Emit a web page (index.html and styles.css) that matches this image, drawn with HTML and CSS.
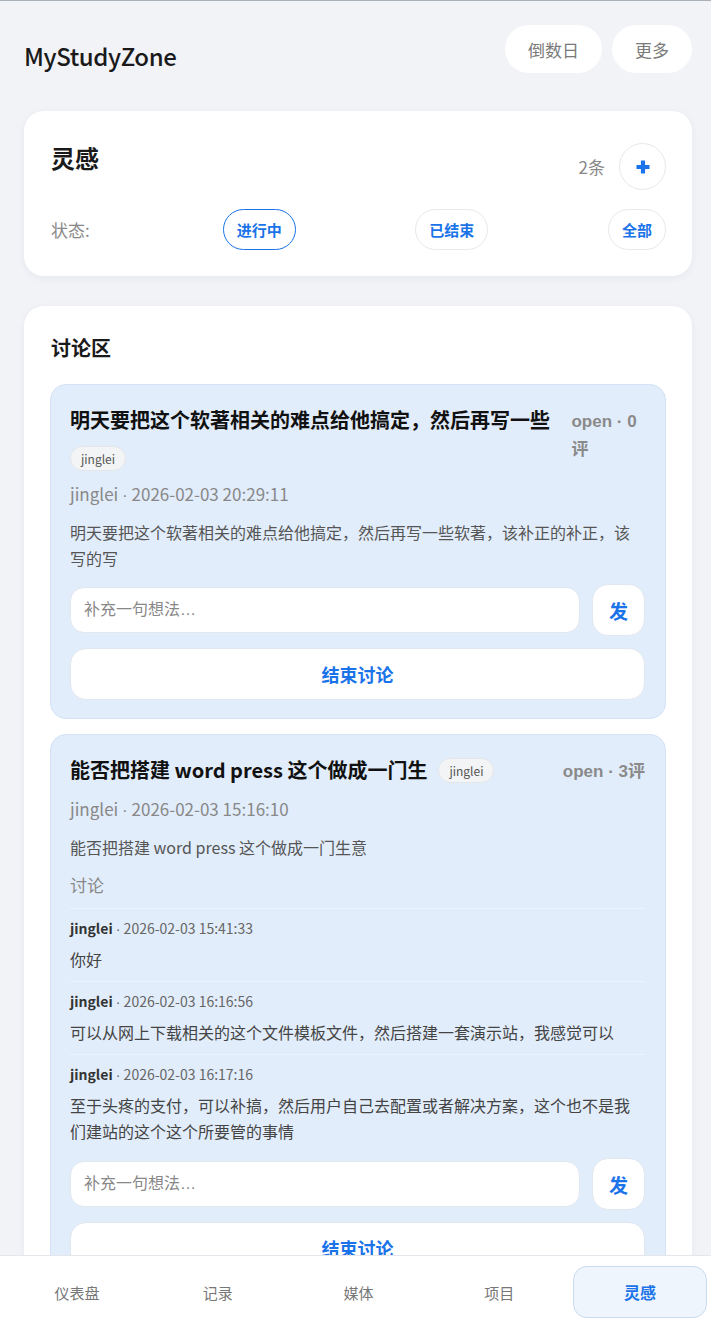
FILE: index.html
```html
<!DOCTYPE html>
<html lang="zh-CN">
<head>
<meta charset="utf-8">
<title>MyStudyZone</title>
<link rel="stylesheet" href="styles.css">
</head>
<body>
<div class="page">
  <header class="topbar">
    <h1 class="brand">MyStudyZone</h1>
    <div class="top-actions">
      <button class="pill-btn">倒数日</button>
      <button class="pill-btn">更多</button>
    </div>
  </header>

  <section class="card summary">
    <div class="summary-head">
      <h2 class="summary-title">灵感</h2>
      <div class="summary-right">
        <span class="count">2条</span>
        <button class="add-btn" aria-label="新增">
          <svg width="16" height="16" viewBox="0 0 16 16"><path d="M8 1.5v13M1.5 8h13" stroke="#1a73e8" stroke-width="4.2" stroke-linecap="butt" fill="none"/></svg>
        </button>
      </div>
    </div>
    <div class="filter-row">
      <span class="filter-label">状态:</span>
      <button class="filter active">进行中</button>
      <button class="filter">已结束</button>
      <button class="filter">全部</button>
    </div>
  </section>

  <section class="card board">
    <h2 class="board-title">讨论区</h2>

    <article class="topic">
      <div class="topic-head">
        <div class="topic-title-wrap">
          <h3 class="topic-title">明天要把这个软著相关的难点给他搞定，然后再写一些</h3>
          <span class="tag">jinglei</span>
        </div>
        <span class="topic-status">open · 0评</span>
      </div>
      <div class="topic-meta">jinglei <span class="dot">·</span> 2026-02-03 20:29:11</div>
      <p class="topic-body">明天要把这个软著相关的难点给他搞定，然后再写一些软著，该补正的补正，该写的写</p>
      <div class="reply-row">
        <input class="reply-input" type="text" placeholder="补充一句想法…">
        <button class="send-btn">发</button>
      </div>
      <button class="close-btn">结束讨论</button>
    </article>

    <article class="topic">
      <div class="topic-head">
        <div class="topic-title-wrap">
          <h3 class="topic-title">能否把搭建 word press 这个做成一门生</h3>
          <span class="tag">jinglei</span>
        </div>
        <span class="topic-status">open · 3评</span>
      </div>
      <div class="topic-meta">jinglei <span class="dot">·</span> 2026-02-03 15:16:10</div>
      <p class="topic-body">能否把搭建 word press 这个做成一门生意</p>
      <div class="comments-label">讨论</div>
      <ul class="comments">
        <li class="comment">
          <div class="comment-meta"><b>jinglei</b> <span class="dot">·</span> 2026-02-03 15:41:33</div>
          <p class="comment-text">你好</p>
        </li>
        <li class="comment">
          <div class="comment-meta"><b>jinglei</b> <span class="dot">·</span> 2026-02-03 16:16:56</div>
          <p class="comment-text">可以从网上下载相关的这个文件模板文件，然后搭建一套演示站，我感觉可以</p>
        </li>
        <li class="comment">
          <div class="comment-meta"><b>jinglei</b> <span class="dot">·</span> 2026-02-03 16:17:16</div>
          <p class="comment-text">至于头疼的支付，可以补搞，然后用户自己去配置或者解决方案，这个也不是我们建站的这个这个所要管的事情</p>
        </li>
      </ul>
      <div class="reply-row">
        <input class="reply-input" type="text" placeholder="补充一句想法…">
        <button class="send-btn">发</button>
      </div>
      <button class="close-btn">结束讨论</button>
    </article>
  </section>
</div>

<nav class="tabbar">
  <a class="tab">仪表盘</a>
  <a class="tab">记录</a>
  <a class="tab">媒体</a>
  <a class="tab">项目</a>
  <a class="tab active">灵感</a>
</nav>
</body>
</html>
```

FILE: styles.css
```css
* { box-sizing: border-box; }

html, body {
  margin: 0;
  padding: 0;
}

body {
  background: #f1f3f7;
  font-family: "Noto Sans CJK SC", "Noto Sans", sans-serif;
  color: #1a1a1a;
  border-top: 1px solid #a9b0b8;
}

button, input {
  font-family: inherit;
}

.dot {
  font-family: "Liberation Sans", sans-serif;
  line-height: 0;
}

.page {
  padding: 24px 19px 100px 24px;
}

/* header */
.topbar {
  display: flex;
  align-items: center;
  justify-content: space-between;
  height: 48px;
}

.brand {
  margin: 12px 0 0;
  font-size: 24px;
  font-weight: 500;
  letter-spacing: -0.4px;
  color: #1a1a1a;
}

.top-actions {
  display: flex;
  gap: 10px;
}

.pill-btn {
  height: 48px;
  border: none;
  background: #fff;
  border-radius: 24px;
  padding: 0 23px;
  font-size: 17px;
  color: #7a7a7a;
}

/* cards */
.card {
  background: #fff;
  border-radius: 20px;
  box-shadow: 0 2px 8px rgba(20, 40, 80, 0.05);
}

.summary {
  margin-top: 38px;
  padding: 28px 26px 26px 27px;
}

.summary-head {
  display: flex;
  justify-content: space-between;
  align-items: flex-start;
}

.summary-title {
  margin: 0;
  font-size: 24px;
  line-height: 38px;
  font-weight: 700;
}

.summary-right {
  display: flex;
  align-items: center;
  gap: 14px;
  margin-top: 4px;
}

.count {
  font-size: 17px;
  color: #888;
}

.add-btn {
  width: 47px;
  height: 47px;
  border-radius: 50%;
  border: 1px solid #e6e8eb;
  background: #fff;
  display: flex;
  align-items: center;
  justify-content: center;
  padding: 0;
}

.filter-row {
  display: flex;
  align-items: center;
  justify-content: space-between;
  margin-top: 19px;
}

.filter-label {
  font-size: 17px;
  color: #888;
  width: 52px;
}

.filter {
  height: 41px;
  padding: 0 13px;
  border-radius: 999px;
  border: 1px solid #e6e8eb;
  background: #fff;
  color: #1a73e8;
  font-size: 15px;
  font-weight: 600;
}

.filter.active {
  border-color: #1a73e8;
}

/* board */
.board {
  margin-top: 30px;
  padding: 28px 26px 26px 26px;
}

.board-title {
  margin: 0 0 22px 1px;
  font-size: 20px;
  line-height: 28px;
  font-weight: 600;
}

.topic {
  background: #e2edfb;
  border: 1px solid #d3e2f5;
  border-radius: 16px;
  padding: 20px 20px 18px 19px;
}

.topic + .topic {
  margin-top: 15px;
}

.topic-head {
  display: flex;
  gap: 12px;
  align-items: flex-start;
}

.topic-title-wrap {
  display: flex;
  flex-wrap: wrap;
  align-items: center;
  column-gap: 11px;
  row-gap: 11px;
  min-width: 0;
}

.topic-title {
  margin: 0;
  font-size: 20px;
  line-height: 30px;
  font-weight: 700;
  color: #111;
}

.tag {
  display: inline-block;
  height: 25px;
  line-height: 23px;
  padding: 0 10px;
  font-size: 12px;
  color: #555;
  background: #f3f4f6;
  border: 1px solid #e4e6ea;
  border-radius: 999px;
}

.topic-status {
  margin-top: 3px;
  margin-left: auto;
  font-family: "Liberation Sans", "Noto Sans CJK SC", sans-serif;
  font-size: 17px;
  line-height: 28px;
  font-weight: 700;
  color: #8a8a8a;
}

.topic-meta {
  margin-top: 11px;
  font-size: 17px;
  line-height: 24px;
  color: #888;
}

.topic-body {
  margin: 13px 0 0;
  font-size: 16px;
  line-height: 26px;
  color: #555;
}

.comments-label {
  margin-top: 13px;
  font-size: 17px;
  line-height: 24px;
  color: #888;
}

.comments {
  list-style: none;
  margin: 11px 0 0;
  padding: 0;
}

.comment {
  border-top: 1px solid #edf3fc;
  padding: 9px 0 9px;
}

.comment:last-child {
  padding-bottom: 0;
}

.comment-meta {
  font-size: 14px;
  line-height: 20px;
  color: #666;
}

.comment-meta b {
  color: #333;
  font-weight: 700;
}

.comment-text {
  margin: 8px 0 0;
  font-size: 16px;
  line-height: 26px;
  color: #444;
}

.comments + .reply-row {
  margin-top: 14px;
}

.reply-row {
  display: flex;
  align-items: center;
  gap: 12px;
  margin-top: 13px;
}

.reply-input {
  flex: 1;
  min-width: 0;
  height: 46px;
  border: 1px solid #e1e7ef;
  border-radius: 14px;
  background: #fff;
  padding: 0 13px;
  font-family: "Liberation Sans", "Noto Sans CJK SC", sans-serif;
  font-size: 16px;
  color: #333;
  outline: none;
}

.reply-input::placeholder {
  color: #888;
}

.send-btn {
  width: 53px;
  height: 52px;
  border: 1px solid #e1e7ef;
  border-radius: 16px;
  background: #fff;
  color: #1a73e8;
  font-size: 19px;
  font-weight: 700;
  padding: 0;
}

.close-btn {
  display: block;
  width: 100%;
  height: 52px;
  margin-top: 12px;
  border: 1px solid #e1e7ef;
  border-radius: 16px;
  background: #fff;
  color: #1a73e8;
  font-size: 18px;
  font-weight: 700;
}

/* bottom nav */
.tabbar {
  position: fixed;
  left: 0;
  right: 0;
  bottom: 0;
  height: 69px;
  background: #fff;
  border-top: 1px solid #e3e6ea;
  display: grid;
  grid-template-columns: repeat(5, 1fr);
  column-gap: 7px;
  padding: 10px 4px 6px 10px;
}

.tab {
  display: flex;
  align-items: center;
  justify-content: center;
  border-radius: 14px;
  border: 1px solid transparent;
  font-size: 15px;
  color: #777;
  text-decoration: none;
}

.tab.active {
  background: #eef5fd;
  border-color: #c8dbf0;
  color: #1a73e8;
  font-weight: 700;
  font-size: 16px;
}
```
